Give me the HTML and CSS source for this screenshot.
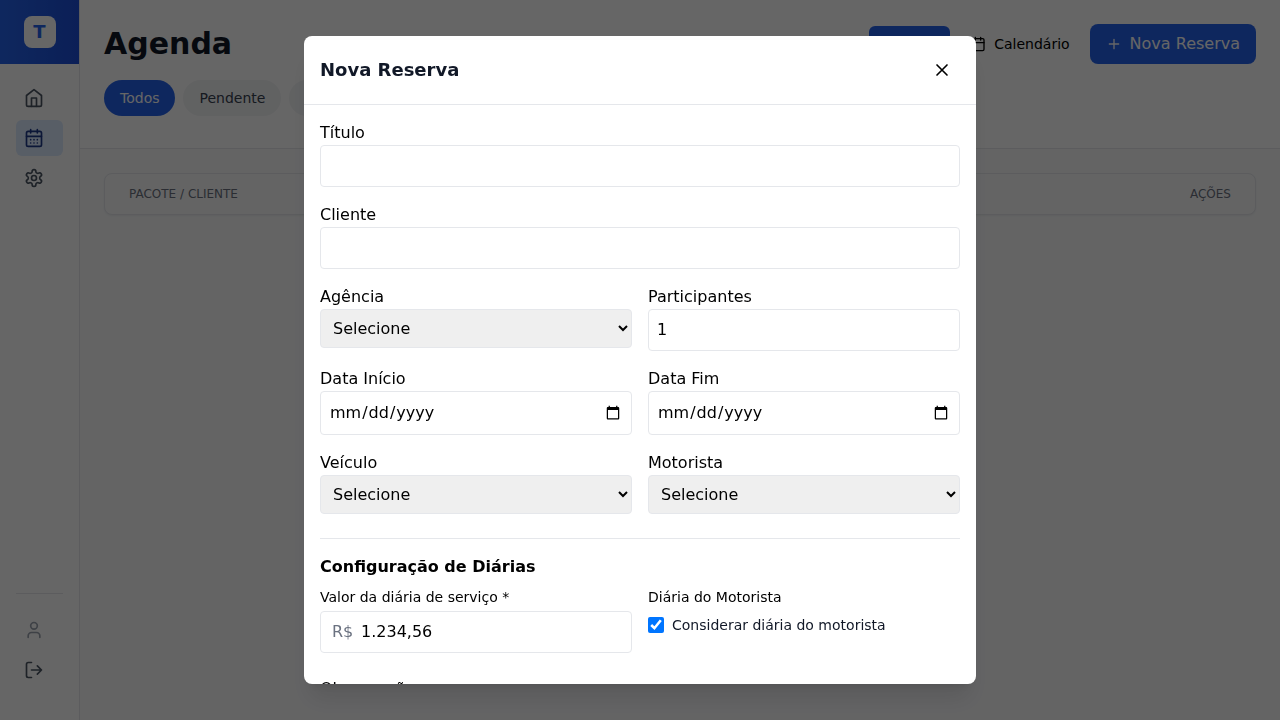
FILE: index.html
```html
<!DOCTYPE html>
<html lang="en">
<head>
<meta charset="utf-8">
<title>Agenda</title>
<link rel="stylesheet" href="styles.css">
</head>
<body>
<div class="app">
  <aside class="sidebar">
    <div class="brand"><div class="logo">T</div></div>
    <nav class="nav">
      <a class="nav-item"><svg class="icon" viewBox="0 0 24 24"><path d="M3 9l9-7 9 7v11a2 2 0 0 1-2 2H5a2 2 0 0 1-2-2z"/><path d="M9 22V12h6v10"/></svg></a>
      <a class="nav-item active"><svg class="icon" viewBox="0 0 24 24"><path d="M8 2v4M16 2v4M3 10h18"/><rect x="3" y="4" width="18" height="18" rx="2"/><path d="M8 14h.01M12 14h.01M16 14h.01M8 18h.01M12 18h.01M16 18h.01"/></svg></a>
      <a class="nav-item"><svg class="icon" viewBox="0 0 24 24"><path d="M12.22 2h-.44a2 2 0 0 0-2 2v.18a2 2 0 0 1-1 1.73l-.43.25a2 2 0 0 1-2 0l-.15-.08a2 2 0 0 0-2.73.73l-.22.38a2 2 0 0 0 .73 2.73l.15.1a2 2 0 0 1 1 1.72v.51a2 2 0 0 1-1 1.74l-.15.09a2 2 0 0 0-.73 2.73l.22.38a2 2 0 0 0 2.73.73l.15-.08a2 2 0 0 1 2 0l.43.25a2 2 0 0 1 1 1.73V20a2 2 0 0 0 2 2h.44a2 2 0 0 0 2-2v-.18a2 2 0 0 1 1-1.73l.43-.25a2 2 0 0 1 2 0l.15.08a2 2 0 0 0 2.73-.73l.22-.39a2 2 0 0 0-.73-2.73l-.15-.08a2 2 0 0 1-1-1.74v-.5a2 2 0 0 1 1-1.74l.15-.09a2 2 0 0 0 .73-2.73l-.22-.38a2 2 0 0 0-2.73-.73l-.15.08a2 2 0 0 1-2 0l-.43-.25a2 2 0 0 1-1-1.73V4a2 2 0 0 0-2-2z"/><circle cx="12" cy="12" r="3"/></svg></a>
    </nav>
    <div class="account">
      <a class="nav-item muted"><svg class="icon" viewBox="0 0 24 24"><path d="M19 21v-2a4 4 0 0 0-4-4H9a4 4 0 0 0-4 4v2"/><circle cx="12" cy="7" r="4"/></svg></a>
      <a class="nav-item"><svg class="icon" viewBox="0 0 24 24"><path d="M9 21H5a2 2 0 0 1-2-2V5a2 2 0 0 1 2-2h4"/><path d="M16 17l5-5-5-5M21 12H9"/></svg></a>
    </div>
  </aside>
  <main class="main">
    <header class="page-header">
      <div class="title-row">
        <h1 class="page-title">Agenda</h1>
        <div class="actions">
          <button class="btn btn-blue"><svg class="icon-sm" viewBox="0 0 24 24"><path d="M8 6h13M8 12h13M8 18h13M3 6h.01M3 12h.01M3 18h.01"/></svg>Lista</button>
          <button class="btn"><svg class="icon-sm" viewBox="0 0 24 24"><path d="M8 2v4M16 2v4M3 10h18"/><rect x="3" y="4" width="18" height="18" rx="2"/></svg>Calendário</button>
          <button class="btn btn-blue btn-new"><svg class="icon-sm" viewBox="0 0 24 24"><path d="M5 12h14M12 5v14"/></svg>Nova Reserva</button>
        </div>
      </div>
      <div class="filters">
        <button class="pill pill-active">Todos</button>
        <button class="pill">Pendente</button>
        <button class="pill">Confirmado</button>
      </div>
    </header>
    <section class="content">
      <div class="table-head"><span>Pacote / Cliente</span><span>Ações</span></div>
    </section>
  </main>
</div>

<div class="overlay">
  <div class="modal">
    <div class="modal-header">
      <h2 class="modal-title">Nova Reserva</h2>
      <button class="close"><svg class="icon" viewBox="0 0 24 24"><path d="M18 6L6 18M6 6l12 12"/></svg></button>
    </div>
    <form class="form">
      <label class="field">Título<input class="control" type="text"></label>
      <label class="field">Cliente<input class="control" type="text"></label>
      <div class="pair">
        <label class="field">Agência<select class="control select"><option>Selecione</option></select></label>
        <label class="field">Participantes<input class="control number" type="number" value="1"></label>
      </div>
      <div class="pair">
        <label class="field">Data Início<input class="control date" type="date"></label>
        <label class="field">Data Fim<input class="control date" type="date"></label>
      </div>
      <div class="pair">
        <label class="field">Veículo<select class="control select"><option>Selecione</option></select></label>
        <label class="field">Motorista<select class="control select"><option>Selecione</option></select></label>
      </div>
      <section class="rates">
        <h3 class="rates-title">Configuração de Diárias</h3>
        <div class="pair">
          <label class="field small">Valor da diária de serviço *
            <span class="control money"><span class="currency">R$</span><input class="amount" type="text" value="1.234,56"></span>
          </label>
          <div class="field small">Diária do Motorista
            <label class="check"><input class="checkbox" type="checkbox" checked>Considerar diária do motorista</label>
          </div>
        </div>
      </section>
      <label class="field notes">Observações<textarea class="control"></textarea></label>
    </form>
  </div>
</div>
</body>
</html>
```
FILE: styles.css
```css
*, *::before, *::after { box-sizing: border-box; }
body {
  margin: 0;
  height: 720px;
  overflow: hidden;
  font: 16px/24px "DejaVu Sans", sans-serif;
  color: #000;
  background: #fff;
}
h1, h2, h3 { margin: 0; }
button, input, select, textarea { font: inherit; color: inherit; margin: 0; }
button { border: 0; background: transparent; }
svg { fill: none; stroke: currentColor; stroke-width: 2; stroke-linecap: round; stroke-linejoin: round; flex: none; }
.icon { width: 20px; height: 20px; display: block; }
.icon-sm { width: 16px; height: 16px; }

.app { display: flex; height: 720px; }
.sidebar { width: 80px; display: flex; flex-direction: column; border-right: 1px solid #e5e7eb; background: #fff; }
.brand { height: 64px; display: flex; align-items: center; justify-content: center; background: linear-gradient(90deg, #2563eb, #1d4ed8); }
.logo {
  width: 32px; height: 32px; border-radius: 8px;
  display: flex; align-items: center; justify-content: center;
  background: #fff; color: #2563eb; font-size: 18px; font-weight: 700;
}
.nav { flex: 1; padding: 16px; display: flex; flex-direction: column; gap: 4px; }
.nav-item { display: block; padding: 8px; border-radius: 6px; color: #4b5563; }
.nav-item.active { background: #dbeafe; color: #1e3a8a; }
.nav-item.muted { color: #9ca3af; }
.account { margin: 0 16px; padding: 18px 0 32px; border-top: 1px solid #e5e7eb; display: flex; flex-direction: column; gap: 4px; }

.main { flex: 1; display: flex; flex-direction: column; }
.page-header { height: 149px; padding: 24px; border-bottom: 1px solid #e5e7eb; }
.title-row { display: flex; align-items: center; justify-content: space-between; height: 40px; }
.page-title { font-size: 30px; line-height: 36px; color: #111827; }
.actions { display: flex; align-items: center; gap: 8px; }
.btn { display: flex; align-items: center; gap: 8px; padding: 8px 12px; border-radius: 6px; font-size: 14px; line-height: 20px; }
.btn-blue { background: #2563eb; color: #fff; }
.btn-new { padding: 8px 16px; border-radius: 8px; font-size: 16px; line-height: 24px; }
.filters { display: flex; gap: 8px; margin-top: 16px; }
.pill { padding: 8px 16px; border-radius: 18px; font-size: 14px; line-height: 20px; background: #f3f4f6; color: #374151; }
.pill-active { background: #2563eb; color: #fff; }
.content { flex: 1; padding: 24px; background: #f9fafb; }
.table-head {
  display: flex; justify-content: space-between; padding: 12px 24px;
  border: 1px solid #e5e7eb; border-radius: 8px; background: #f9fafb;
  box-shadow: 0 1px 2px rgba(0, 0, 0, .05);
  font-size: 12px; line-height: 16px; text-transform: uppercase; color: #6b7280;
}

.overlay { position: fixed; inset: 0; display: flex; align-items: center; justify-content: center; background: rgba(0, 0, 0, .6); }
.modal {
  width: 672px; height: 648px; overflow: hidden;
  border-radius: 8px; background: #fff;
  box-shadow: 0 20px 25px -5px rgba(0, 0, 0, .1), 0 8px 10px -6px rgba(0, 0, 0, .1);
}
.modal-header { display: flex; align-items: center; justify-content: space-between; padding: 16px; border-bottom: 1px solid #e5e7eb; }
.modal-title { font-size: 18px; line-height: 28px; color: #111827; }
.close { padding: 8px; }
.form { display: flex; flex-direction: column; gap: 16px; padding: 16px; }
.field { display: flex; flex-direction: column; }
.pair { display: grid; grid-template-columns: 1fr 1fr; gap: 16px; }
.control { width: 100%; height: 42px; padding: 8px; border: 1px solid #e5e7eb; border-radius: 4px; background: #fff; }
.number { padding: 7px 8px 9px; }
.select { height: 39px; background: #efefef; }
.date { height: 44px; }
.rates { margin-top: 8px; padding-top: 16px; border-top: 1px solid #e5e7eb; }
.rates-title { font-size: 16px; line-height: 24px; margin-bottom: 8px; }
.small { font-size: 14px; line-height: 20px; }
.money { display: flex; align-items: center; margin-top: 4px; padding: 0 11px; font-size: 16px; line-height: 24px; }
.currency { flex: none; width: 29px; color: #6b7280; }
.amount { flex: 1; min-width: 0; padding: 0; border: 0; outline: 0; background: transparent; }
.check { display: flex; align-items: center; gap: 8px; margin-top: 8px; color: #111827; }
.checkbox { width: 16px; height: 16px; }
.notes { margin-top: 8px; }
```
